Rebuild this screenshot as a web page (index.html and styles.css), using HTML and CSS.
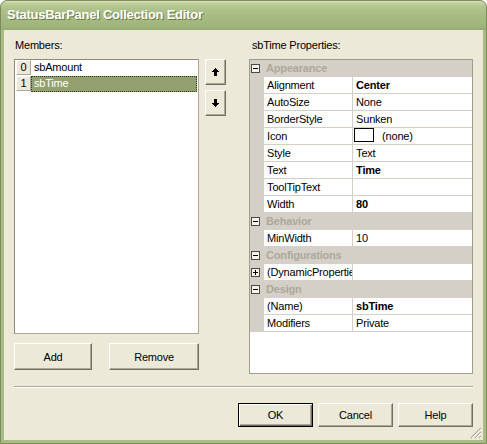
FILE: index.html
```html
<!DOCTYPE html>
<html>
<head>
<meta charset="utf-8">
<link rel="stylesheet" href="styles.css">
</head>
<body>
<div class="window">
  <div class="titlebar"><span class="title">StatusBarPanel Collection Editor</span></div>
  <div class="client">
    <div class="labels">
      <span class="lbl-members">Members:</span>
      <span class="lbl-props">sbTime Properties:</span>
    </div>
    <div class="main">
      <div class="leftcol">
        <div class="listbox">
          <div class="item"><span class="idx">0</span><span class="name">sbAmount</span></div>
          <div class="item selected"><span class="idx">1</span><span class="name">sbTime</span></div>
        </div>
        <div class="lbtns">
          <button class="btn add">Add</button>
          <button class="btn remove">Remove</button>
        </div>
      </div>
      <div class="arrows">
        <button class="btn arrow"><svg width="7" height="8" viewBox="0 0 7 8"><path d="M3 0h1v1h1v1h1v1h1v1H5v4H2V4H0V3h1V2h1V1h1z" fill="#000"/></svg></button>
        <button class="btn arrow"><svg width="7" height="8" viewBox="0 0 7 8"><path d="M2 0h3v4h2v1H6v1H5v1H4v1H3V7H2V6H1V5H0V4h2z" fill="#000"/></svg></button>
      </div>
      <div class="grid">
        <div class="cat"><span class="exp"><span class="minus"></span></span><span class="catname">Appearance</span></div>
        <div class="prop"><span class="margin"></span><span class="pname">Alignment</span><span class="pval bold">Center</span></div>
        <div class="prop"><span class="margin"></span><span class="pname">AutoSize</span><span class="pval">None</span></div>
        <div class="prop"><span class="margin"></span><span class="pname">BorderStyle</span><span class="pval">Sunken</span></div>
        <div class="prop"><span class="margin"></span><span class="pname">Icon</span><span class="pval"><span class="iconbox"></span>(none)</span></div>
        <div class="prop"><span class="margin"></span><span class="pname">Style</span><span class="pval">Text</span></div>
        <div class="prop"><span class="margin"></span><span class="pname">Text</span><span class="pval bold">Time</span></div>
        <div class="prop"><span class="margin"></span><span class="pname">ToolTipText</span><span class="pval"></span></div>
        <div class="prop"><span class="margin"></span><span class="pname">Width</span><span class="pval bold">80</span></div>
        <div class="cat"><span class="exp"><span class="minus"></span></span><span class="catname">Behavior</span></div>
        <div class="prop"><span class="margin"></span><span class="pname">MinWidth</span><span class="pval">10</span></div>
        <div class="cat"><span class="exp"><span class="minus"></span></span><span class="catname">Configurations</span></div>
        <div class="prop"><span class="margin"><span class="exp"><span class="minus"></span><span class="vbar"></span></span></span><span class="pname">(DynamicProperties)</span><span class="pval"></span></div>
        <div class="cat"><span class="exp"><span class="minus"></span></span><span class="catname">Design</span></div>
        <div class="prop"><span class="margin"></span><span class="pname">(Name)</span><span class="pval bold">sbTime</span></div>
        <div class="prop"><span class="margin"></span><span class="pname">Modifiers</span><span class="pval">Private</span></div>
      </div>
    </div>
    <div class="sep"></div>
    <div class="footer">
      <button class="btn dlg default">OK</button>
      <button class="btn dlg">Cancel</button>
      <button class="btn dlg">Help</button>
    </div>
    <svg class="grip" width="12" height="12" viewBox="0 0 12 12">
      <path d="M11 1L1 11M11 5L5 11M11 9L9 11" stroke="#aca899" stroke-width="1.2"/>
      <path d="M11 2L2 11M11 6L6 11M11 10L10 11" stroke="#fff" stroke-width="1"/>
    </svg>
  </div>
</div>
</body>
</html>
```
FILE: styles.css
```css
* { box-sizing: border-box; }
html, body { margin: 0; padding: 0; background: #ffffff; }
body {
  font-family: "Liberation Sans", Arial, sans-serif;
  font-size: 11px;
  letter-spacing: -0.2px;
  color: #000;
}
.window {
  width: 487px;
  height: 444px;
  border: 1px solid #7d8c5a;
  border-radius: 7px 7px 0 0;
  background: #a9bc84;
  padding: 0 3px 3px;
  display: flex;
  flex-direction: column;
  overflow: hidden;
}
.titlebar {
  height: 29px;
  margin: 0 -3px;
  padding: 0 0 2px 6px;
  display: flex;
  align-items: center;
  background: linear-gradient(to bottom, #dce6bf 0px, #c1d0a0 2px, #b2c48f 6px, #a8bc84 14px, #a2b77d 22px, #9cb277 27px, #93a96d 29px);
  border-radius: 6px 6px 0 0;
}
.title {
  font-weight: bold;
  font-size: 13px;
  letter-spacing: -0.25px;
  color: #fff;
  text-shadow: 1px 1px 0 #6b7a48;
}
.client {
  position: relative;
  height: 410px;
  background: #ece9d8;
  padding: 8px 10px 0 10px;
}
.labels {
  display: flex;
  height: 14px;
  line-height: 14px;
  margin-bottom: 7px;
}
.lbl-members { width: 237px; padding-left: 1px; }
.lbl-props { padding-left: 1px; }
.main {
  display: flex;
  height: 315px;
}
.leftcol { width: 186px; display: flex; flex-direction: column; }
.listbox {
  height: 275px;
  background: #fff;
  border: 1px solid #aca899;
  border-left-color: #8e8b7a;
  border-top-color: #8e8b7a;
}
.item {
  display: flex;
  height: 15px;
  margin-bottom: 1px;
  padding-left: 1px;
}
.idx {
  width: 15px;
  height: 15px;
  background: #ece9d8;
  border: 1px solid;
  border-color: #fff #aca899 #aca899 #fff;
  text-align: center;
  line-height: 13px;
  letter-spacing: 0;
}
.name {
  flex: 1;
  line-height: 13px;
  padding-left: 2px;
  border: 1px solid transparent;
  margin-right: 1px;
}
.item.selected .name {
  height: 16px;
  background: #93a070;
  color: #fff;
  border: 1px dotted #33361f;
}
.lbtns {
  display: flex;
  justify-content: space-between;
  margin-top: 9px;
}
.btn {
  font: inherit;
  letter-spacing: inherit;
  color: #000;
  background: #ece9d8;
  border: 1px solid;
  border-color: #fff #716f64 #716f64 #fff;
  box-shadow: inset -1px -1px 0 #aca899;
  padding: 0;
  margin: 0;
  display: flex;
  align-items: center;
  justify-content: center;
}
.add { width: 78px; height: 27px; }
.remove { width: 90px; height: 27px; }
.arrows {
  width: 21px;
  margin-left: 6px;
  display: flex;
  flex-direction: column;
  gap: 5px;
}
.arrow { width: 21px; height: 26px; }
.arrow svg { display: block; shape-rendering: crispEdges; }
.grid {
  width: 225px;
  height: 315px;
  margin-left: 23px;
  background: #fff;
  border: 1px solid #a09d8c;
  overflow: hidden;
}
.cat {
  display: flex;
  align-items: center;
  height: 17px;
  background: #d4d0c8;
  padding-bottom: 1px;
}
.exp {
  position: relative;
  width: 9px;
  height: 9px;
  border: 1px solid #4a4a42;
  background: #f4f3ee;
  margin-left: 1px;
  flex: none;
}
.minus {
  position: absolute;
  left: 1px;
  top: 3px;
  width: 5px;
  height: 1px;
  background: #000;
}
.vbar {
  position: absolute;
  left: 3px;
  top: 1px;
  width: 1px;
  height: 5px;
  background: #000;
}
.catname {
  margin-left: 6px;
  font-weight: bold;
  color: #aca899;
  line-height: 16px;
}
.prop {
  display: flex;
  height: 17px;
}
.margin {
  width: 14px;
  background: #d4d0c8;
  display: flex;
  align-items: center;
  flex: none;
}
.pname {
  width: 89px;
  flex: none;
  border-bottom: 1px solid #d4d0c8;
  border-right: 1px solid #d4d0c8;
  padding-left: 3px;
  line-height: 16px;
  white-space: nowrap;
  overflow: hidden;
}
.pval {
  flex: 1;
  border-bottom: 1px solid #d4d0c8;
  padding-left: 3px;
  line-height: 16px;
  display: flex;
  align-items: center;
  white-space: nowrap;
}
.bold { font-weight: bold; }
.iconbox {
  width: 20px;
  height: 14px;
  border: 1px solid #000;
  background: #fff;
  margin-left: -2px;
  margin-right: 8px;
  align-self: flex-start;
}
.sep {
  margin-top: 12px;
  height: 2px;
  border-top: 1px solid #aca899;
  border-bottom: 1px solid #fff;
}
.footer {
  display: flex;
  justify-content: flex-end;
  gap: 5px;
  margin-top: 15px;
}
.dlg { width: 75px; height: 24px; }
.default {
  border: 1px solid #000;
  box-shadow: inset 1px 1px 0 #fff, inset -1px -1px 0 #716f64, inset -2px -2px 0 #aca899;
}
.grip { position: absolute; right: 1px; bottom: 1px; }
```
